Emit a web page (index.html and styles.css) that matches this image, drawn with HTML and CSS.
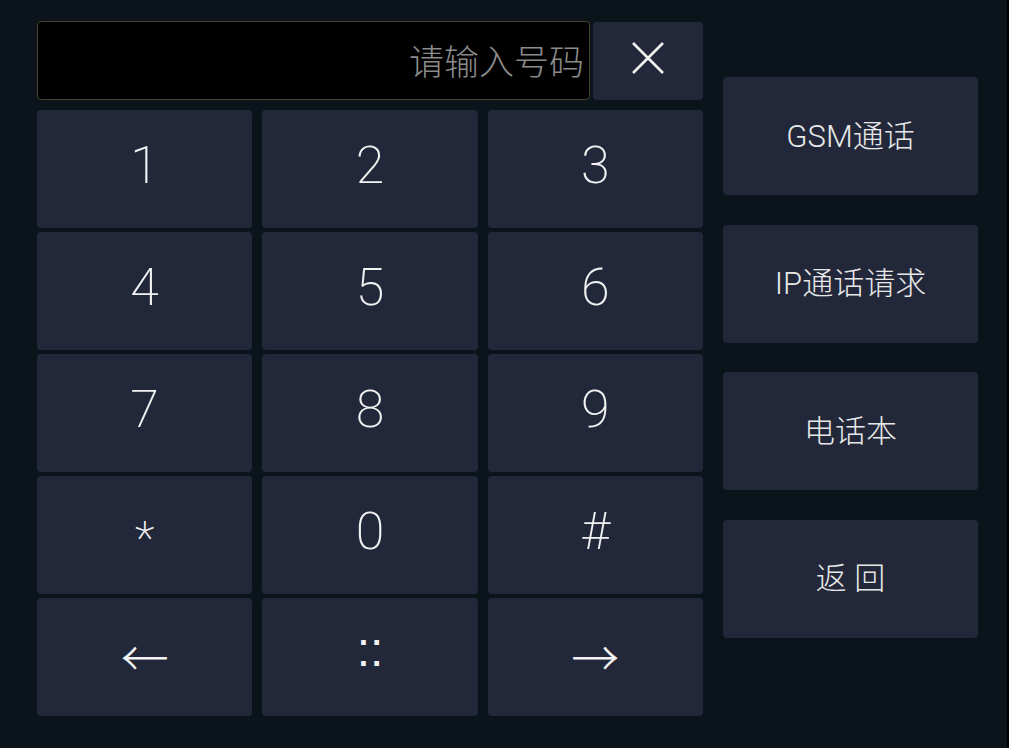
FILE: index.html
```html
<!DOCTYPE html>
<html lang="zh">
<head>
<meta charset="utf-8">
<title>拨号</title>
<link rel="stylesheet" href="styles.css">
</head>
<body>
<div class="app">
  <div class="dialer">
    <div class="entry">
      <div class="field"><span class="placeholder">请输入号码</span></div>
      <button class="clear" aria-label="清除">
        <svg width="34" height="34" viewBox="0 0 34 34"><path d="M2 2 L32 32 M32 2 L2 32" stroke="#f4f4f4" stroke-width="2.6" fill="none"/></svg>
      </button>
    </div>
    <div class="keys">
      <button class="key">1</button>
      <button class="key">2</button>
      <button class="key">3</button>
      <button class="key">4</button>
      <button class="key">5</button>
      <button class="key">6</button>
      <button class="key">7</button>
      <button class="key">8</button>
      <button class="key">9</button>
      <button class="key key-star">*</button>
      <button class="key">0</button>
      <button class="key">#</button>
      <button class="key key-arrow">←</button>
      <button class="key key-dots">::</button>
      <button class="key key-arrow">→</button>
    </div>
  </div>
  <div class="actions">
    <button class="action">GSM通话</button>
    <button class="action">IP通话请求</button>
    <button class="action">电话本</button>
    <button class="action">返 回</button>
  </div>
</div>
</body>
</html>
```

FILE: styles.css
```css
html {
  background: #000;
}
body {
  margin: 0;
}
.app {
  width: 1007px;
  height: 748px;
  box-sizing: border-box;
  background: #0b141a;
  display: flex;
  align-items: flex-start;
  gap: 20px;
  padding: 21px 0 0 37px;
  font-family: Roboto, "Noto Sans CJK SC", sans-serif;
}
button {
  border: none;
  margin: 0;
  padding: 0;
  font: inherit;
  color: inherit;
  cursor: pointer;
}
.dialer {
  width: 666px;
  display: flex;
  flex-direction: column;
  gap: 10px;
}
.entry {
  display: flex;
  gap: 3px;
  height: 79px;
}
.field {
  flex: 1;
  background: #000;
  border: 1px solid #45432c;
  border-radius: 4px;
  display: flex;
  align-items: center;
  justify-content: flex-end;
  padding: 0 5px 2px 0;
}
.placeholder {
  font-family: "Noto Sans CJK SC", sans-serif;
  font-weight: 300;
  font-size: 35px;
  color: #8b8b8b;
}
.clear {
  width: 110px;
  margin-top: 1px;
  background: #222839;
  border-radius: 4px;
  display: flex;
  align-items: center;
  justify-content: center;
  padding-bottom: 7px;
}
.keys {
  display: grid;
  grid-template-columns: repeat(3, 1fr);
  grid-auto-rows: 118px;
  column-gap: 10px;
  row-gap: 4px;
}
.key {
  background: #222839;
  border-radius: 4px;
  color: #f2f2f2;
  font-size: 52px;
  font-weight: 200;
  line-height: 1;
  display: flex;
  align-items: center;
  justify-content: center;
  padding-bottom: 6px;
}
.key-star {
  font-size: 46px;
  padding-top: 12px;
}
.key-arrow {
  font-family: "Noto Sans CJK SC", sans-serif;
  font-size: 48px;
  font-weight: 300;
  padding-bottom: 4px;
}
.key-dots {
  font-family: "Liberation Sans", sans-serif;
  font-size: 48px;
  font-weight: 400;
  letter-spacing: 0;
  padding-bottom: 14px;
}
.actions {
  width: 255px;
  margin-top: 56px;
  display: flex;
  flex-direction: column;
  gap: 29.5px;
}
.action {
  height: 118px;
  background: #222839;
  border-radius: 4px;
  color: #e8e8e8;
  font-family: Roboto, "Noto Sans CJK SC", sans-serif;
  font-size: 31px;
  font-weight: 300;
  padding-bottom: 6px;
}
```
